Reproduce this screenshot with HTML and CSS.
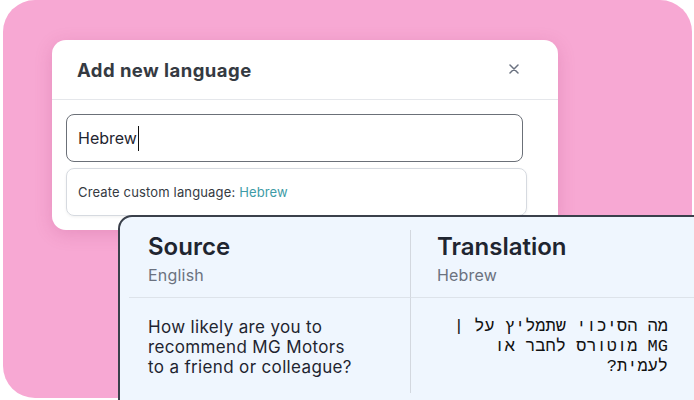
FILE: index.html
```html
<!DOCTYPE html>
<html lang="en">
<head>
<meta charset="utf-8">
<title>Add new language</title>
<link rel="stylesheet" href="styles.css">
</head>
<body>
<div class="pink">
  <div class="modal">
    <div class="modal-head">
      <h2 class="modal-title">Add new language</h2>
      <svg class="close" width="10" height="10" viewBox="0 0 10 10" aria-hidden="true"><path d="M1 1L9 9M9 1L1 9" stroke="#6b7280" stroke-width="1.5" stroke-linecap="round"/></svg>
    </div>
    <div class="modal-body">
      <div class="input"><span class="input-text">Hebrew</span><span class="caret"></span></div>
      <div class="option">Create custom language: <span class="accent">Hebrew</span></div>
    </div>
  </div>
  <div class="card">
    <div class="grid">
      <div class="cell head left">
        <div class="col-title">Source</div>
        <div class="col-sub">English</div>
      </div>
      <div class="cell head right">
        <div class="col-title">Translation</div>
        <div class="col-sub">Hebrew</div>
      </div>
      <div class="cell body left">
        <p class="src">How likely are you to recommend MG Motors to a friend or colleague?</p>
      </div>
      <div class="cell body right">
        <p class="tr" dir="rtl" lang="he">מה הסיכוי שתמליץ על | MG מוטורס לחבר או לעמית?</p>
      </div>
    </div>
  </div>
</div>
</body>
</html>
```
FILE: styles.css
```css
html, body {
  margin: 0;
  padding: 0;
}
body {
  width: 694px;
  height: 400px;
  overflow: hidden;
  background: #ffffff;
  font-family: Inter, "Liberation Sans", sans-serif;
  color: #1f2530;
}
.pink {
  box-sizing: border-box;
  margin-left: 3px;
  width: 689px;
  height: 398px;
  border-radius: 32px;
  background: #f7a8d3;
  padding-top: 40px;
  padding-left: 49px;
}
.modal {
  box-sizing: border-box;
  width: 506px;
  height: 190px;
  background: #ffffff;
  border-radius: 14px;
  box-shadow: 0 4px 18px rgba(160, 40, 100, 0.18);
}
.modal-head {
  box-sizing: border-box;
  height: 60px;
  display: flex;
  align-items: center;
  justify-content: space-between;
  padding: 0 39px 0 25px;
  border-bottom: 1px solid #e5e7eb;
}
.modal-title {
  margin: 0;
  font-size: 18.5px;
  font-weight: 700;
  color: #353a42;
  letter-spacing: 0.45px;
}
.close {
  display: block;
  margin-top: -1px;
}
.modal-body {
  padding: 14px 0 0 14px;
  display: flex;
  flex-direction: column;
  gap: 6px;
}
.input {
  box-sizing: border-box;
  width: 457px;
  height: 48px;
  border: 1px solid #6b7078;
  border-radius: 8px;
  display: flex;
  align-items: center;
  padding-left: 11px;
  font-size: 16px;
  color: #1f2530;
}
.caret {
  display: block;
  width: 1px;
  height: 25px;
  background: #111111;
  margin-left: 1px;
}
.option {
  box-sizing: border-box;
  width: 461px;
  height: 48px;
  border: 1px solid #d6dae0;
  border-radius: 8px;
  display: flex;
  align-items: center;
  padding-left: 11px;
  font-size: 13px;
  letter-spacing: 0.15px;
  color: #353a42;
  white-space: pre;
  box-shadow: 0 1px 3px rgba(0, 0, 0, 0.06);
}
.accent {
  color: #3e9ba6;
}
.card {
  position: relative;
  box-sizing: border-box;
  margin-top: -15px;
  margin-left: 66px;
  width: 600px;
  height: 200px;
  background: #eff6fe;
  border: 2px solid #3a404b;
  border-radius: 14px;
  padding-top: 13px;
  padding-left: 9px;
}
.grid {
  display: grid;
  grid-template-columns: 282px 283px;
  grid-template-rows: 68px 95px;
}
.cell.left {
  border-right: 1px solid #d3d8df;
}
.cell.head {
  box-sizing: border-box;
  border-bottom: 1px solid #dde3ea;
  padding-top: 3px;
}
.head.left {
  padding-left: 19px;
}
.head.right {
  padding-left: 26px;
}
.col-title {
  font-size: 24px;
  line-height: 28px;
  font-weight: 600;
  color: #1f2530;
}
.col-sub {
  margin-top: 4px;
  font-size: 16px;
  letter-spacing: 0.2px;
  line-height: 20px;
  color: #6b7280;
}
.body.left {
  padding-left: 19px;
  padding-top: 19px;
}
.body.right {
  padding: 19px 26px 0 37px;
}
.src {
  margin: 0;
  width: 215px;
  font-size: 17px;
  letter-spacing: 0.35px;
  line-height: 20px;
  color: #1f2530;
}
.tr {
  margin: 0;
  font-family: "Liberation Mono", monospace;
  font-size: 17px;
  line-height: 20px;
  color: #111111;
  text-align: right;
}
```
